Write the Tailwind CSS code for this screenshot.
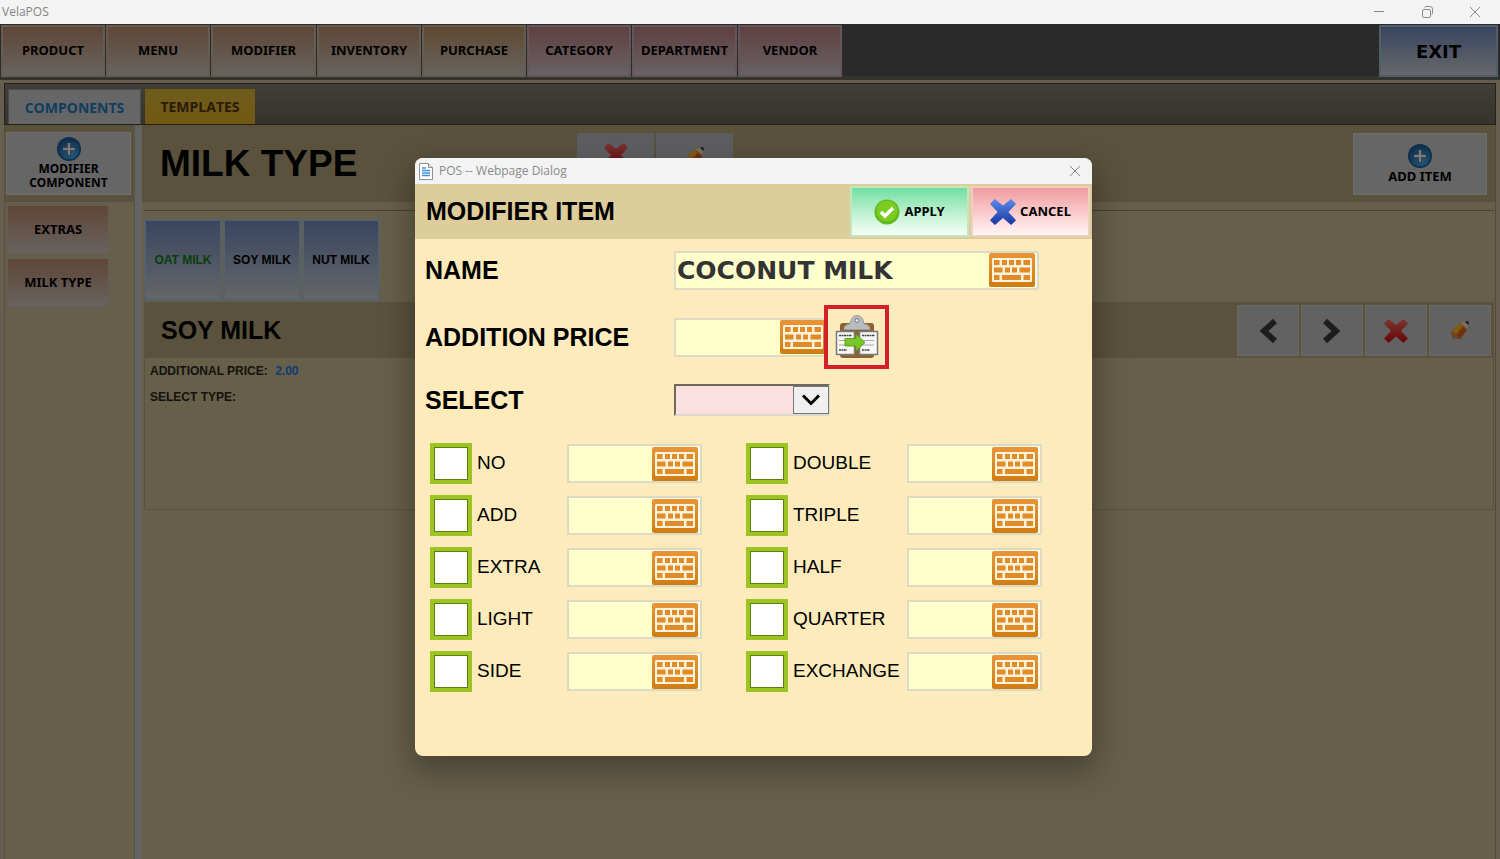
<!DOCTYPE html>
<html lang="en">
<head>
  <meta charset="UTF-8" />
  <meta name="viewport" content="width=device-width, initial-scale=1" />
  <title>VelaPOS</title>
  <script src="https://cdn.jsdelivr.net/npm/@tailwindcss/browser@4"></script>
  <style>
    body { font-family: 'Noto Sans', 'Open Sans', sans-serif; }
  </style>
</head>
<body class="bg-[#665f4a] min-h-screen flex flex-col text-black overflow-hidden">
  <!-- Shared icons -->
  <svg class="absolute w-0 h-0" aria-hidden="true">
    <defs>
      <linearGradient id="orange" x1="0" y1="0" x2="0" y2="1"><stop offset="0" stop-color="#e8953a" /><stop offset="1" stop-color="#cf7d12" /></linearGradient>
      <linearGradient id="redX" x1="0" y1="0" x2="0" y2="1"><stop offset="0" stop-color="#7c3430" /><stop offset="1" stop-color="#690606" /></linearGradient>
      <linearGradient id="blueX" x1="0" y1="0" x2="0" y2="1"><stop offset="0" stop-color="#5b8bea" /><stop offset="1" stop-color="#1637a0" /></linearGradient>
      <radialGradient id="plusBg" cx="0.6" cy="0.75" r="0.7"><stop offset="0" stop-color="#24597c" /><stop offset="1" stop-color="#0f3151" /></radialGradient>
    </defs>
    <symbol id="keyboard" viewBox="0 0 46 34">
      <rect width="46" height="34" rx="2" fill="url(#orange)" />
      <rect x="3" y="5" width="40" height="24" rx="1.5" fill="#fff3dc" />
      <g fill="#e08a28">
        <rect x="5" y="7" width="5.5" height="5" /><rect x="13" y="7" width="5" height="5" /><rect x="20" y="7" width="5" height="5" /><rect x="27" y="7" width="5" height="5" /><rect x="34.500" y="7" width="6.500" height="5" />
        <rect x="5" y="14.500" width="8.500" height="5" /><rect x="16" y="14.500" width="5" height="5" /><rect x="23" y="14.500" width="5" height="5" /><rect x="30.500" y="14.500" width="10.500" height="5" />
        <rect x="5" y="22" width="5.500" height="5" /><rect x="13" y="22" width="19" height="5" /><rect x="34.500" y="22" width="6.500" height="5" />
      </g>
    </symbol>
    <symbol id="cross" viewBox="0 0 24 24">
      <path d="M4.500 0 L12 6 L19.500 0 L24 4.500 L17 12 L24 19.500 L19.500 24 L12 17.500 L4.500 24 L0 19.500 L7 12 L0 4.500 Z" />
    </symbol>
    <symbol id="plus" viewBox="0 0 24 24">
      <circle cx="12" cy="12" r="12" fill="#102d49" />
      <circle cx="12" cy="12" r="10.500" fill="url(#plusBg)" />
      <path d="M12 5.500v13M5.500 12h13" stroke="#222b33" stroke-width="4" />
      <path d="M12 6v12M6 12h12" stroke="#7c7c7c" stroke-width="2.500" />
    </symbol>
    <symbol id="pencil" viewBox="0 0 20 20">
      <path d="M1 12 L10 2 L17 8 L10 18 L3 18 Z" fill="#7a4310" />
      <path d="M2 10 L9 2 L13 5 L6 13 Z" fill="#7d5c18" />
      <path d="M7 14 L13 6 L17 9 L10 18 Z" fill="#71300d" />
      <path d="M1 12 L7 16 L9 18 L3 18 Z" fill="#62483c" />
      <path d="M10 2 L15 1 L18 4 L17 8 Z" fill="#7f6f55" />
      <path d="M15 0.500 L18.500 0.500 L18.500 4 Z" fill="#0b0b12" />
    </symbol>
  </svg>

  <!-- Window title bar -->
  <header class="h-6 bg-[#f3f3f3] flex items-center justify-between pl-[2px] pr-[19px]">
    <span class="text-[12px] text-[#858585] font-['Open_Sans']">VelaPOS</span>
    <div class="flex items-center gap-9 text-[#8a8a8a]">
      <button aria-label="Minimize"><svg class="w-3 h-3" viewBox="0 0 12 12" fill="none" stroke="currentColor"><path d="M1 5.500h10" /></svg></button>
      <button aria-label="Restore"><svg class="w-3 h-3" viewBox="0 0 12 12" fill="none" stroke="currentColor"><rect x="1.500" y="3.500" width="8" height="8" rx="1.500" /><path d="M3.500 1.500q.5-1 1.500-1h4q2.500 0 2.500 2.500v4q0 1-1 1.500" /></svg></button>
      <button aria-label="Close"><svg class="w-3 h-3" viewBox="0 0 12 12" fill="none" stroke="currentColor"><path d="M1 1l10 10M11 1L1 11" /></svg></button>
    </div>
  </header>

  <!-- Main navigation -->
  <nav class="h-14 bg-[#2a2a2a] flex items-start justify-between pl-px pt-px pr-[2px] border-b-4 border-[#35332e] text-[13px] font-bold">
    <div class="flex gap-px">
      <button class="w-[104px] h-[52px] border-2 border-[#655d51] bg-linear-to-b from-[#5f4637] to-[#676360]">PRODUCT</button>
      <button class="w-[104px] h-[52px] border-2 border-[#655d51] bg-linear-to-b from-[#5f4637] to-[#676360]">MENU</button>
      <button class="w-[105px] h-[52px] border-2 border-[#655d51] bg-linear-to-b from-[#5f4637] to-[#676360]">MODIFIER</button>
      <button class="w-[104px] h-[52px] border-2 border-[#655d51] bg-linear-to-b from-[#5f4637] to-[#676360]">INVENTORY</button>
      <button class="w-[104px] h-[52px] border-2 border-[#655d51] bg-linear-to-b from-[#5f4933] to-[#67635d]">PURCHASE</button>
      <button class="w-[104px] h-[52px] border-2 border-[#65565a] bg-linear-to-b from-[#5f4041] to-[#676264]">CATEGORY</button>
      <button class="w-[105px] h-[52px] border-2 border-[#65565a] bg-linear-to-b from-[#5f4041] to-[#676264]">DEPARTMENT</button>
      <button class="w-[104px] h-[52px] border-2 border-[#65565a] bg-linear-to-b from-[#5f4041] to-[#676264]">VENDOR</button>
    </div>
    <button class="w-[119px] h-[52px] border-2 border-[#516067] bg-linear-to-b from-[#39455f] to-[#67686a] text-[18px] font-['DejaVu_Sans']">EXIT</button>
  </nav>

  <div class="flex-1 flex flex-col border-t-3 border-l-4 border-r-4 border-[#665f50]">
    <!-- Tabs -->
    <div class="h-[42px] shrink-0 flex items-end gap-1 pl-[3px] border border-[#24211c] bg-linear-to-b from-[#423f38] to-[#36322c] font-['Open_Sans'] font-bold text-[14px]">
      <button class="w-[133px] h-[35px] bg-[#666] text-[#103c5e] border border-b-0 border-[#4b4b4b]">COMPONENTS</button>
      <button class="w-[110px] h-[35px] bg-linear-to-b from-[#6f5c1d] to-[#715810] text-[#2b1a06]">TEMPLATES</button>
    </div>

    <div class="flex-1 flex">
      <!-- Modifier components -->
      <aside class="w-[130px] shrink-0 border-l border-[#57513f]">
        <div class="h-[77px] bg-[#5a523d] pt-[7px] pl-px">
          <button class="w-[125px] h-[63px] bg-[#666] border border-[#706e69] flex flex-col items-center pt-1 text-[12px] leading-[14px] font-bold">
            <svg class="w-6 h-6 mb-px"><use href="#plus" /></svg>
            MODIFIER<br />COMPONENT
          </button>
        </div>
        <div class="flex flex-col gap-[2px] pl-px pt-[2px] text-[13px] font-bold">
          <button class="w-[104px] h-[51px] border-2 border-[#655d51] bg-linear-to-b from-[#5f4637] to-[#676360]">EXTRAS</button>
          <button class="w-[104px] h-[51px] border-2 border-[#655d51] bg-linear-to-b from-[#5f4637] to-[#676360]">MILK TYPE</button>
        </div>
      </aside>
      <div class="w-2 shrink-0 mt-px bg-[#646464] border-l border-[#55534c]"></div>

      <!-- Selected modifier -->
      <main class="flex-1 border-r border-[#504b3c]">
        <div class="h-[77px] bg-[#5a523d] flex items-start pt-2 pl-[18px] pr-2">
          <h1 class="w-[417px] text-[37px] leading-[62px] font-bold font-['Liberation_Sans']">MILK TYPE</h1>
          <div class="flex gap-[2px]">
            <button aria-label="Delete modifier" class="w-[77px] h-[62px] bg-linear-to-b from-[#5c5d60] to-[#666] flex justify-center pt-[10px]"><svg class="w-6 h-6" fill="url(#redX)"><use href="#cross" /></svg></button>
            <button aria-label="Edit modifier" class="w-[77px] h-[62px] bg-linear-to-b from-[#5c5d60] to-[#666] flex justify-center pt-[14px]"><svg class="w-5 h-5"><use href="#pencil" /></svg></button>
          </div>
          <button class="ml-auto w-[134px] h-[62px] bg-[#666] border border-[#706e69] flex flex-col items-center pt-[10px] text-[13px] leading-[14px] font-bold">
            <svg class="w-6 h-6 mb-px"><use href="#plus" /></svg>
            ADD ITEM
          </button>
        </div>

        <div class="mt-2 ml-[2px] mr-px border-t border-[#48422f] pt-2">
          <div class="flex gap-px text-[12px] font-bold font-['Liberation_Sans']">
            <button class="w-[78px] h-[82px] border-2 border-[#56616a] bg-linear-to-b from-[#3a4660] to-[#656667] text-[#063f0b]">OAT MILK</button>
            <button class="w-[78px] h-[82px] border-2 border-[#56616a] bg-linear-to-b from-[#3a4660] to-[#656667]">SOY MILK</button>
            <button class="w-[78px] h-[82px] border-2 border-[#56616a] bg-linear-to-b from-[#3a4660] to-[#656667]">NUT MILK</button>
          </div>

          <section class="mt-px h-[208px] border border-[#575340] font-['Liberation_Sans'] font-bold">
            <div class="h-[55px] bg-[#5a523d] flex items-center pl-4 pr-[2px]">
              <h2 class="text-[25px]">SOY MILK</h2>
              <div class="ml-auto flex gap-[2px]">
                <button aria-label="Previous item" class="w-[62px] h-[51px] bg-[#626262] border border-[#6a6862] flex items-center justify-center"><svg class="w-6 h-6" viewBox="0 0 24 24" fill="none" stroke="#1d1d1d" stroke-width="6"><path d="M19 2L8 12l11 10" /></svg></button>
                <button aria-label="Next item" class="w-[62px] h-[51px] bg-[#626262] border border-[#6a6862] flex items-center justify-center"><svg class="w-6 h-6" viewBox="0 0 24 24" fill="none" stroke="#1d1d1d" stroke-width="6"><path d="M5 2l11 10L5 22" /></svg></button>
                <button aria-label="Delete item" class="w-[62px] h-[51px] bg-[#626262] border border-[#6a6862] flex items-center justify-center"><svg class="w-6 h-6" fill="url(#redX)"><use href="#cross" /></svg></button>
                <button aria-label="Edit item" class="w-[62px] h-[51px] bg-[#626262] border border-[#6a6862] flex items-center justify-center"><svg class="w-5 h-5"><use href="#pencil" /></svg></button>
              </div>
            </div>
            <div class="pl-[5px] pt-[5px] text-[12px] leading-4 text-[#14120d]">
              <p class="mb-[10px]">ADDITIONAL PRICE: <span class="ml-1 font-bold text-[#0d3b78]">2.00</span></p>
              <p>SELECT TYPE:</p>
            </div>
          </section>
        </div>
      </main>
    </div>
  </div>

  <!-- Modifier item dialog -->
  <div role="dialog" aria-labelledby="dialogTitle" class="absolute left-[415px] top-[158px] w-[677px] rounded-lg overflow-hidden bg-[#fdebbb] shadow-[0_12px_32px_4px_rgba(0,0,0,0.3)] font-['Liberation_Sans']">
    <div class="h-[26px] bg-[#f3f3f3] flex items-center pl-1 pr-[11px]">
      <svg class="w-[14px] h-[17px]" viewBox="0 0 14 17"><path d="M.5.5h9l4 4v12H.5z" fill="#fff" stroke="#8a8f98" /><path d="M9.500.5v4h4" fill="#e3e6ea" stroke="#8a8f98" /><path d="M3 5h4M3 7.500h8M3 10h8M3 12.500h8" stroke="#3f8fdd" stroke-width="1.300" /></svg>
      <span class="ml-[6px] text-[12px] text-[#8a8a8a] font-['Open_Sans']">POS -- Webpage Dialog</span>
      <button aria-label="Close dialog" class="ml-auto"><svg class="w-3 h-3" viewBox="0 0 12 12" fill="none" stroke="#858585"><path d="M1 1l10 10M11 1L1 11" /></svg></button>
    </div>

    <div class="h-[55px] bg-[#dccd9b] flex items-center pl-[11px] pr-[2px]">
      <h2 id="dialogTitle" class="text-[25px] font-bold">MODIFIER ITEM</h2>
      <div class="ml-auto flex gap-[2px] font-['Noto_Sans'] text-[13px] font-bold">
        <button class="w-[119px] h-[51px] border-2 border-[#c3e6bd] bg-linear-to-b from-[#70dfa0] to-[#f6fff9] flex items-center justify-center gap-1">
          <svg class="w-[26px] h-[26px]" viewBox="0 0 26 26"><circle cx="13" cy="13" r="12.500" fill="#62b81c" /><circle cx="13" cy="12" r="10.500" fill="#7ccb22" /><path d="M7 13l4 4 8-8" fill="none" stroke="#fff" stroke-width="3.500" /></svg>
          APPLY
        </button>
        <button class="w-[119px] h-[51px] border-2 border-[#edd0bd] bg-linear-to-b from-[#ef9b9f] to-[#fff6f6] flex items-center justify-center gap-1">
          <svg class="w-[26px] h-[26px]" fill="url(#blueX)"><use href="#cross" /></svg>
          CANCEL
        </button>
      </div>
    </div>

    <form class="pb-[64px]">
      <div class="grid grid-cols-[249px_1fr] items-center pl-[10px] text-[25px] font-bold">
        <label for="name" class="leading-[62px]">NAME</label>
        <div class="w-[365px] h-[39px] flex items-center bg-[#fffbe4] border-2 border-[#ddd9c2] pr-[2px]">
          <input id="name" type="text" value="COCONUT MILK" class="flex-1 min-w-0 h-full bg-[#ffffcc] pl-px text-[25px] font-bold text-[#333] font-['DejaVu_Sans'] outline-none" />
          <button type="button" aria-label="Keyboard for name" class="shrink-0"><svg class="w-[46px] h-[34px]"><use href="#keyboard" /></svg></button>
        </div>

        <label for="price" class="leading-[72px]">ADDITION PRICE</label>
        <div class="flex items-center">
          <div class="w-[150px] h-[39px] flex items-center bg-[#ffffcc] border-2 border-r-0 border-[#ddd9c2]">
            <input id="price" type="text" class="flex-1 min-w-0 h-full bg-[#ffffcc] px-1 outline-none" />
            <button type="button" aria-label="Keyboard for price" class="shrink-0 w-11 overflow-hidden"><svg class="w-[46px] h-[34px]"><use href="#keyboard" /></svg></button>
          </div>
          <button type="button" aria-label="Copy price" class="w-[65px] h-16 border-4 border-[#d32027] flex items-center justify-center">
            <svg class="w-11 h-11" viewBox="0 0 44 44">
              <rect x="5" y="8" width="34" height="35" rx="3" fill="#8e6230" />
              <path d="M9 14.500q0-5 6-5.500 1-8.500 7-8.500t7 8.500q6 .5 6 5.500z" fill="#b9bcbe" stroke="#9b9ea0" />
              <circle cx="22" cy="5.500" r="2" fill="#e6e8e9" stroke="#777" />
              <rect x="1.500" y="16.500" width="18" height="23" fill="#f7f7f5" stroke="#77797b" stroke-width="1.500" />
              <rect x="24.500" y="16.500" width="18" height="23" fill="#f7f7f5" stroke="#77797b" stroke-width="1.500" />
              <path d="M4 20.500h13M27 20.500h13M4 35h8M27 35h8" stroke="#444" stroke-width="1.500" stroke-dasharray="2 .5" />
              <path d="M4 25.500h12M4 30h12M27 25.500h12M27 30h12" stroke="#a9a9a9" />
              <path d="M10 23.500h11v-4.500l9 8.500-9 8.500v-5H10z" fill="#79c62a" stroke="#5aa31a" />
            </svg>
          </button>
        </div>

        <label for="selectType" class="leading-[54px]">SELECT</label>
        <div class="relative w-[156px]">
          <select id="selectType" class="block appearance-none w-full h-8 bg-[#fcdfe0] border-2 border-t-[#6d675c] border-l-[#6d675c] border-b-[#ddd9cc] border-r-[#ddd9cc] outline-none text-base">
            <option></option>
          </select>
          <span class="absolute top-[2px] right-px w-9 h-7 bg-[#f0f0f0] border border-[#777] flex items-center justify-center pointer-events-none">
            <svg class="w-[18px] h-3" viewBox="0 0 18 12" fill="none" stroke="#000" stroke-width="3"><path d="M1 1.500l8 8 8-8" /></svg>
          </span>
        </div>
      </div>

      <!-- Prefix options -->
      <div class="mt-4 grid grid-cols-[137px_179px_161px_1fr] auto-rows-[41px] gap-y-[11px] items-center pl-[15px] text-[19px]">
        <label class="flex items-center gap-[5px]"><input type="checkbox" class="appearance-none w-[42px] h-[41px] bg-white border-4 border-[#9dc521] shadow-[inset_0_0_0_1px_#5f7c17] checked:bg-[#9dc521]" />NO</label>
        <div class="w-[135px] h-[39px] flex items-center bg-[#fffbe4] border-2 border-[#ddd9c2] pr-[2px]">
          <input type="text" aria-label="No price" class="flex-1 min-w-0 h-full bg-[#ffffcc] px-1 outline-none" />
          <button type="button" aria-label="Keyboard for no" class="shrink-0"><svg class="w-[46px] h-[34px]"><use href="#keyboard" /></svg></button>
        </div>
        <label class="flex items-center gap-[5px]"><input type="checkbox" class="appearance-none w-[42px] h-[41px] bg-white border-4 border-[#9dc521] shadow-[inset_0_0_0_1px_#5f7c17] checked:bg-[#9dc521]" />DOUBLE</label>
        <div class="w-[135px] h-[39px] flex items-center bg-[#fffbe4] border-2 border-[#ddd9c2] pr-[2px]">
          <input type="text" aria-label="Double price" class="flex-1 min-w-0 h-full bg-[#ffffcc] px-1 outline-none" />
          <button type="button" aria-label="Keyboard for double" class="shrink-0"><svg class="w-[46px] h-[34px]"><use href="#keyboard" /></svg></button>
        </div>

        <label class="flex items-center gap-[5px]"><input type="checkbox" class="appearance-none w-[42px] h-[41px] bg-white border-4 border-[#9dc521] shadow-[inset_0_0_0_1px_#5f7c17] checked:bg-[#9dc521]" />ADD</label>
        <div class="w-[135px] h-[39px] flex items-center bg-[#fffbe4] border-2 border-[#ddd9c2] pr-[2px]">
          <input type="text" aria-label="Add price" class="flex-1 min-w-0 h-full bg-[#ffffcc] px-1 outline-none" />
          <button type="button" aria-label="Keyboard for add" class="shrink-0"><svg class="w-[46px] h-[34px]"><use href="#keyboard" /></svg></button>
        </div>
        <label class="flex items-center gap-[5px]"><input type="checkbox" class="appearance-none w-[42px] h-[41px] bg-white border-4 border-[#9dc521] shadow-[inset_0_0_0_1px_#5f7c17] checked:bg-[#9dc521]" />TRIPLE</label>
        <div class="w-[135px] h-[39px] flex items-center bg-[#fffbe4] border-2 border-[#ddd9c2] pr-[2px]">
          <input type="text" aria-label="Triple price" class="flex-1 min-w-0 h-full bg-[#ffffcc] px-1 outline-none" />
          <button type="button" aria-label="Keyboard for triple" class="shrink-0"><svg class="w-[46px] h-[34px]"><use href="#keyboard" /></svg></button>
        </div>

        <label class="flex items-center gap-[5px]"><input type="checkbox" class="appearance-none w-[42px] h-[41px] bg-white border-4 border-[#9dc521] shadow-[inset_0_0_0_1px_#5f7c17] checked:bg-[#9dc521]" />EXTRA</label>
        <div class="w-[135px] h-[39px] flex items-center bg-[#fffbe4] border-2 border-[#ddd9c2] pr-[2px]">
          <input type="text" aria-label="Extra price" class="flex-1 min-w-0 h-full bg-[#ffffcc] px-1 outline-none" />
          <button type="button" aria-label="Keyboard for extra" class="shrink-0"><svg class="w-[46px] h-[34px]"><use href="#keyboard" /></svg></button>
        </div>
        <label class="flex items-center gap-[5px]"><input type="checkbox" class="appearance-none w-[42px] h-[41px] bg-white border-4 border-[#9dc521] shadow-[inset_0_0_0_1px_#5f7c17] checked:bg-[#9dc521]" />HALF</label>
        <div class="w-[135px] h-[39px] flex items-center bg-[#fffbe4] border-2 border-[#ddd9c2] pr-[2px]">
          <input type="text" aria-label="Half price" class="flex-1 min-w-0 h-full bg-[#ffffcc] px-1 outline-none" />
          <button type="button" aria-label="Keyboard for half" class="shrink-0"><svg class="w-[46px] h-[34px]"><use href="#keyboard" /></svg></button>
        </div>

        <label class="flex items-center gap-[5px]"><input type="checkbox" class="appearance-none w-[42px] h-[41px] bg-white border-4 border-[#9dc521] shadow-[inset_0_0_0_1px_#5f7c17] checked:bg-[#9dc521]" />LIGHT</label>
        <div class="w-[135px] h-[39px] flex items-center bg-[#fffbe4] border-2 border-[#ddd9c2] pr-[2px]">
          <input type="text" aria-label="Light price" class="flex-1 min-w-0 h-full bg-[#ffffcc] px-1 outline-none" />
          <button type="button" aria-label="Keyboard for light" class="shrink-0"><svg class="w-[46px] h-[34px]"><use href="#keyboard" /></svg></button>
        </div>
        <label class="flex items-center gap-[5px]"><input type="checkbox" class="appearance-none w-[42px] h-[41px] bg-white border-4 border-[#9dc521] shadow-[inset_0_0_0_1px_#5f7c17] checked:bg-[#9dc521]" />QUARTER</label>
        <div class="w-[135px] h-[39px] flex items-center bg-[#fffbe4] border-2 border-[#ddd9c2] pr-[2px]">
          <input type="text" aria-label="Quarter price" class="flex-1 min-w-0 h-full bg-[#ffffcc] px-1 outline-none" />
          <button type="button" aria-label="Keyboard for quarter" class="shrink-0"><svg class="w-[46px] h-[34px]"><use href="#keyboard" /></svg></button>
        </div>

        <label class="flex items-center gap-[5px]"><input type="checkbox" class="appearance-none w-[42px] h-[41px] bg-white border-4 border-[#9dc521] shadow-[inset_0_0_0_1px_#5f7c17] checked:bg-[#9dc521]" />SIDE</label>
        <div class="w-[135px] h-[39px] flex items-center bg-[#fffbe4] border-2 border-[#ddd9c2] pr-[2px]">
          <input type="text" aria-label="Side price" class="flex-1 min-w-0 h-full bg-[#ffffcc] px-1 outline-none" />
          <button type="button" aria-label="Keyboard for side" class="shrink-0"><svg class="w-[46px] h-[34px]"><use href="#keyboard" /></svg></button>
        </div>
        <label class="flex items-center gap-[5px]"><input type="checkbox" class="appearance-none w-[42px] h-[41px] bg-white border-4 border-[#9dc521] shadow-[inset_0_0_0_1px_#5f7c17] checked:bg-[#9dc521]" />EXCHANGE</label>
        <div class="w-[135px] h-[39px] flex items-center bg-[#fffbe4] border-2 border-[#ddd9c2] pr-[2px]">
          <input type="text" aria-label="Exchange price" class="flex-1 min-w-0 h-full bg-[#ffffcc] px-1 outline-none" />
          <button type="button" aria-label="Keyboard for exchange" class="shrink-0"><svg class="w-[46px] h-[34px]"><use href="#keyboard" /></svg></button>
        </div>
      </div>
    </form>
  </div>
</body>
</html>
